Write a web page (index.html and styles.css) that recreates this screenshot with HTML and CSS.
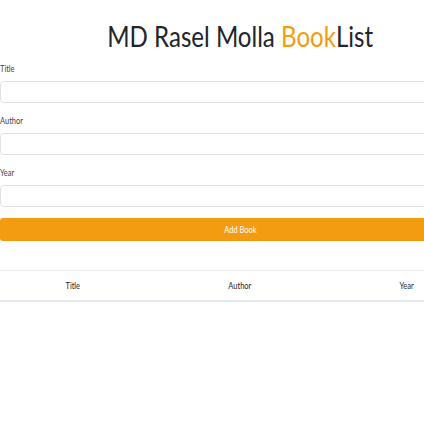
FILE: index.html
```html
<!DOCTYPE html>
<html>
<head>
<meta charset="utf-8">
<link rel="stylesheet" href="styles.css">
</head>
<body>
<div class="container">
  <h1 class="title"><span class="squeeze">MD Rasel Molla <span class="accent">Book</span>List</span></h1>
  <form class="book-form">
    <div class="field">
      <label class="label"><span class="squeeze-left">Title</span></label>
      <input class="input" type="text">
    </div>
    <div class="field">
      <label class="label"><span class="squeeze-left">Author</span></label>
      <input class="input" type="text">
    </div>
    <div class="field">
      <label class="label"><span class="squeeze-left">Year</span></label>
      <input class="input" type="text">
    </div>
    <button class="btn" type="button"><span class="squeeze">Add Book</span></button>
  </form>
  <table class="book-table">
    <thead>
      <tr>
        <th class="col-title"><span class="squeeze">Title</span></th>
        <th class="col-author"><span class="squeeze">Author</span></th>
        <th class="col-year"><span class="squeeze">Year</span></th>
      </tr>
    </thead>
    <tbody></tbody>
  </table>
</div>
</body>
</html>
```
FILE: styles.css
```css
html, body {
  margin: 0;
  padding: 0;
  background: #fff;
  overflow: hidden;
}
body {
  font-family: Lato, "Noto Sans", sans-serif;
  color: #212529;
}
.container {
  width: 480px;
}
.squeeze {
  display: inline-block;
  transform: scaleX(0.83);
  transform-origin: center;
}
.squeeze-left {
  display: inline-block;
  transform: scaleX(0.83);
  transform-origin: left;
}
.title {
  margin: 18px 0 0;
  font-size: 29px;
  line-height: 35px;
  font-weight: 400;
  text-align: center;
  white-space: nowrap;
  color: #212529;
}
.accent {
  color: #f39c12;
}
.book-form {
  display: flex;
  flex-direction: column;
  margin-top: 10px;
}
.field {
  display: flex;
  flex-direction: column;
  margin-bottom: 12px;
}
.field:nth-child(3) {
  margin-bottom: 11px;
}
.label {
  font-size: 9px;
  line-height: 12px;
  color: #444;
  margin-bottom: 6px;
}
.input {
  box-sizing: border-box;
  width: 480px;
  height: 22px;
  border: 1px solid #dee2e6;
  border-radius: 4px;
  margin: 0;
  padding: 0 6px;
  background: #fff;
}
.btn {
  box-sizing: border-box;
  width: 480px;
  height: 23px;
  border: none;
  border-radius: 3px;
  background: #f39c12;
  color: #fff;
  font-family: Lato, "Noto Sans", sans-serif;
  font-size: 9px;
  padding: 0;
}
.book-table {
  margin-top: 29px;
  width: 480px;
  border-collapse: collapse;
}
.book-table th {
  font-size: 9px;
  font-weight: 400;
  height: 29px;
  padding: 0;
  border-top: 1px solid #e9ecef;
  border-bottom: 2px solid #e3e7ee;
  text-align: center;
  color: #212529;
}
.col-title { width: 146px; }
.col-author { width: 188px; }
.col-year { width: 146px; }
```
